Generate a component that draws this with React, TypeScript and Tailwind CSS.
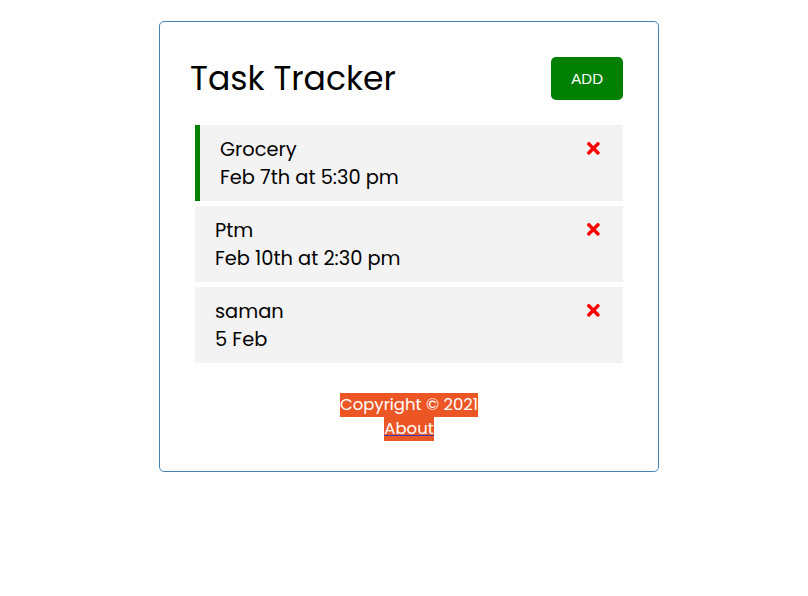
import { FaTimes } from "react-icons/fa";

type Task = { id: number; text: string; day: string; reminder: boolean };

const tasks: Task[] = [
  { id: 1, text: "Grocery", day: "Feb 7th at 5:30 pm", reminder: true },
  { id: 2, text: "Ptm", day: "Feb 10th at 2:30 pm", reminder: false },
  { id: 3, text: "saman", day: "5 Feb", reminder: false },
];

const TaskItem = ({ task }: { task: Task }) => (
  <div
    className={
      "m-[5px] bg-[#f3f3f3] px-5 pt-[11px] pb-[9px] text-[19.4px] leading-[28px] text-black " +
      (task.reminder ? "border-l-[5px] border-l-[#008000]" : "")
    }
  >
    <h3 className="flex items-center justify-between font-normal">
      {task.text}
      <FaTimes className="mb-1 text-[18.72px] text-[#ff0000]" />
    </h3>
    <p>{task.day}</p>
  </div>
);

export default function App() {
  return (
    <div
      className="flex min-h-screen justify-center bg-white pl-[10px]"
      style={{ fontFamily: "Poppins, 'Open Sans', sans-serif" }}
    >
      <div className="mt-[21px] h-fit w-[500px] rounded-[5px] border border-[#4682b4] p-[30px]">
        <header className="mb-5 flex items-center justify-between">
          <h1 className="pt-px text-[33.1px] leading-[48px] font-normal text-black">Task Tracker</h1>
          <button
            className="m-[5px] rounded-[5px] bg-[#008000] px-5 py-[10px] text-[15px] leading-[23px] text-white"
            style={{ fontFamily: "'Liberation Sans', Arial, sans-serif" }}
          >
            ADD
          </button>
        </header>
        {tasks.map((t) => (
          <TaskItem key={t.id} task={t} />
        ))}
        <footer className="mt-[30px] flex flex-col items-center text-[16.5px] leading-6 text-white">
          <p className="bg-[#ec5524]">Copyright © 2021</p>
          <a href="#" className="bg-[#ec5524] underline decoration-[#3b3bc0] decoration-1">
            About
          </a>
        </footer>
      </div>
    </div>
  );
}
